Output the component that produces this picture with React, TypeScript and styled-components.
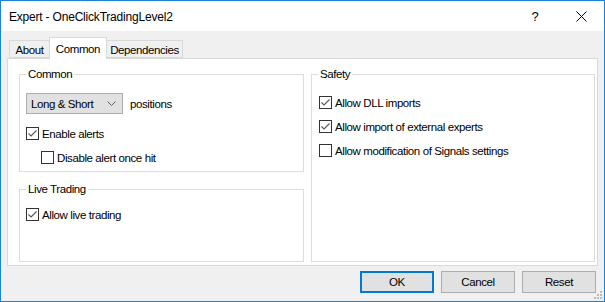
import React from "react";
import styled, {createGlobalStyle} from "styled-components";

const GlobalStyle = createGlobalStyle`
    body {
        margin: 0;
        font-family: "Liberation Sans", Arial, sans-serif;
        font-size: 11.5px;
        letter-spacing: -0.4px;
        color: #000;
    }
`;

const StyledWindow = styled.div`
    position: relative;
    display: flex;
    flex-direction: column;
    box-sizing: border-box;
    width: 605px;
    height: 302px;
    border: 1px solid #1883d7;
    background: #f0f0f0;
`;

const StyledTitleBar = styled.div`
    display: flex;
    align-items: center;
    height: 30px;
    padding-left: 8px;
    background: #fff;
`;

const StyledTitle = styled.div`
    flex: 1;
    font-size: 12px;
    letter-spacing: -0.2px;
    padding-top: 1px;
`;

const StyledCaptionButton = styled.div`
    display: flex;
    align-items: center;
    justify-content: center;
    width: 46px;
    height: 30px;
    font-size: 13px;
    letter-spacing: 0;
`;

const StyledBody = styled.div`
    flex: 1;
    display: flex;
    flex-direction: column;
    padding: 6px 6px 8px 6px;
`;

const StyledTabStrip = styled.div`
    display: flex;
    align-items: flex-end;
    height: 21px;
    padding-left: 2px;
    position: relative;
    z-index: 1;
`;

const StyledTab = styled.div<{$active?: boolean; $w: number}>`
    box-sizing: border-box;
    display: flex;
    align-items: center;
    justify-content: center;
    width: ${props => props.$w}px;
    height: ${props => props.$active ? 22 : 18}px;
    margin-bottom: ${props => props.$active ? -1 : 0}px;
    margin-right: -1px;
    padding-top: ${props => props.$active ? 0 : 1}px;
    border: 1px solid #d9d9d9;
    border-bottom: ${props => props.$active ? "none" : "1px solid #d9d9d9"};
    background: ${props => props.$active ? "#fff" : "#f0f0f0"};
    white-space: nowrap;
    z-index: ${props => props.$active ? 2 : 1};
`;

const StyledPanel = styled.div`
    flex: 1;
    display: grid;
    grid-template-columns: 285px 284px;
    column-gap: 7px;
    padding: 15px 2px 3px 11px;
    border: 1px solid #d9d9d9;
    background: #fff;
`;

const StyledColumn = styled.div`
    display: flex;
    flex-direction: column;
    gap: 17px;
`;

const StyledGroupBox = styled.div<{$h?: number; $top: number; $left: number}>`
    position: relative;
    box-sizing: border-box;
    display: flex;
    flex-direction: column;
    gap: 11px;
    ${props => props.$h ? `height: ${props.$h}px;` : "flex: 1;"}
    padding: ${props => props.$top}px 6px 0 ${props => props.$left}px;
    border: 1px solid #dcdcdc;
`;

const StyledLegend = styled.span`
    position: absolute;
    top: -8px;
    left: 6px;
    padding: 0 2px;
    background: #fff;
    line-height: 15px;
`;

const StyledRow = styled.div<{$indent?: number; $mt?: number}>`
    display: flex;
    align-items: center;
    height: 13px;
    margin-left: ${props => props.$indent || 0}px;
    margin-top: ${props => props.$mt || 0}px;
    white-space: nowrap;
`;

const StyledBox = styled.div`
    box-sizing: border-box;
    flex: none;
    width: 13px;
    height: 13px;
    margin-right: 3px;
    border: 1px solid #333;
    background: #fff;

    svg {
        display: block;
    }
`;

const StyledComboRow = styled.div`
    display: flex;
    align-items: center;
    height: 21px;
`;

const StyledCombo = styled.div`
    box-sizing: border-box;
    display: flex;
    align-items: center;
    justify-content: space-between;
    width: 97px;
    height: 21px;
    margin-right: 7px;
    padding: 0 6px 0 4px;
    border: 1px solid #adadad;
    background: #e1e1e1;
`;

const StyledButtonRow = styled.div`
    display: flex;
    justify-content: flex-end;
    gap: 7px;
    margin-top: 5px;
    padding-right: 2px;
`;

const StyledButton = styled.div<{$default?: boolean}>`
    box-sizing: border-box;
    display: flex;
    align-items: center;
    justify-content: center;
    width: 74px;
    height: 22px;
    border: ${props => props.$default ? "2px solid #0078d7" : "1px solid #adadad"};
    background: #e1e1e1;
`;

const StyledGrip = styled.svg`
    position: absolute;
    right: 2px;
    bottom: 2px;
`;

const CheckBox: React.FC<{checked?: boolean}> = ({checked}) => <StyledBox>
    {checked && <svg width="11" height="11" viewBox="0 0 11 11">
        <polyline points="1.5,5.5 4,8 9.5,2.5" fill="none" stroke="#555" strokeWidth="1.1"/>
    </svg>}
</StyledBox>;

const Check: React.FC<{label: string; checked?: boolean; indent?: number; mt?: number}> = ({label, checked, indent, mt}) =>
    <StyledRow $indent={indent} $mt={mt}>
        <CheckBox checked={checked}/>
        {label}
    </StyledRow>;

const App: React.FC = () => {
    return <>
        <GlobalStyle/>
        <StyledWindow>
            <StyledTitleBar>
                <StyledTitle>Expert - OneClickTradingLevel2</StyledTitle>
                <StyledCaptionButton>?</StyledCaptionButton>
                <StyledCaptionButton>
                    <svg width="11" height="11" viewBox="0 0 11 11">
                        <path d="M0.5 0.5 L10.5 10.5 M10.5 0.5 L0.5 10.5" stroke="#000" strokeWidth="1"/>
                    </svg>
                </StyledCaptionButton>
            </StyledTitleBar>
            <StyledBody>
                <StyledTabStrip>
                    <StyledTab $w={41}>About</StyledTab>
                    <StyledTab $w={58} $active>Common</StyledTab>
                    <StyledTab $w={77}>Dependencies</StyledTab>
                </StyledTabStrip>
                <StyledPanel>
                    <StyledColumn>
                        <StyledGroupBox $h={98} $top={18} $left={6}>
                            <StyledLegend>Common</StyledLegend>
                            <StyledComboRow>
                                <StyledCombo>
                                    Long &amp; Short
                                    <svg width="9" height="5" viewBox="0 0 9 5">
                                        <polyline points="0.5,0.5 4.5,4.5 8.5,0.5" fill="none" stroke="#606060" strokeWidth="1"/>
                                    </svg>
                                </StyledCombo>
                                positions
                            </StyledComboRow>
                            <Check label="Enable alerts" checked mt={2}/>
                            <Check label="Disable alert once hit" indent={15}/>
                        </StyledGroupBox>
                        <StyledGroupBox $top={18} $left={6}>
                            <StyledLegend>Live Trading</StyledLegend>
                            <Check label="Allow live trading" checked/>
                        </StyledGroupBox>
                    </StyledColumn>
                    <StyledGroupBox $top={21} $left={7}>
                        <StyledLegend>Safety</StyledLegend>
                        <Check label="Allow DLL imports" checked/>
                        <Check label="Allow import of external experts" checked/>
                        <Check label="Allow modification of Signals settings"/>
                    </StyledGroupBox>
                </StyledPanel>
                <StyledButtonRow>
                    <StyledButton $default>OK</StyledButton>
                    <StyledButton>Cancel</StyledButton>
                    <StyledButton>Reset</StyledButton>
                </StyledButtonRow>
            </StyledBody>
            <StyledGrip width="8" height="8" viewBox="0 0 8 8">
                <rect x="6" y="0" width="2" height="2" fill="#bcbcbc"/>
                <rect x="3" y="3" width="2" height="2" fill="#bcbcbc"/>
                <rect x="6" y="3" width="2" height="2" fill="#bcbcbc"/>
                <rect x="0" y="6" width="2" height="2" fill="#bcbcbc"/>
                <rect x="3" y="6" width="2" height="2" fill="#bcbcbc"/>
                <rect x="6" y="6" width="2" height="2" fill="#bcbcbc"/>
            </StyledGrip>
        </StyledWindow>
    </>;
};

export default App;
